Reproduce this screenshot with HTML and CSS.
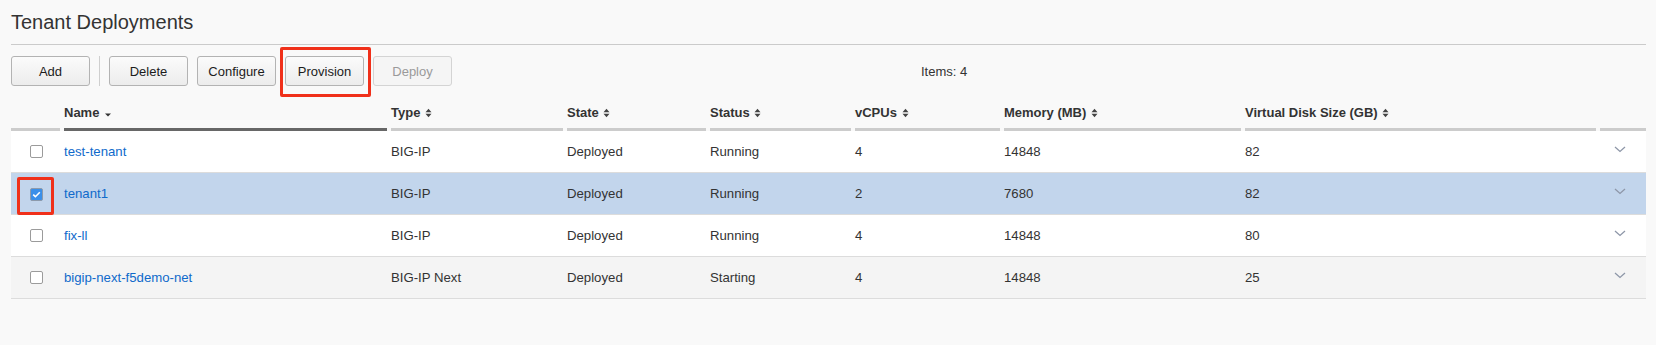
FILE: index.html
```html
<!DOCTYPE html>
<html lang="en">
<head>
    <meta charset="UTF-8">
    <title>Tenant Deployments</title>
    <link rel="stylesheet" href="styles.css">
</head>
<body>
    <div class="page">
        <h1 class="title">Tenant Deployments</h1>
        <div class="toolbar">
            <button class="btn">Add</button>
            <span class="sep"></span>
            <button class="btn">Delete</button>
            <button class="btn">Configure</button>
            <span class="mark mark-btn"><button class="btn">Provision</button></span>
            <button class="btn" disabled>Deploy</button>
            <span class="items">Items: 4</span>
        </div>
        <table class="grid">
            <colgroup>
                <col class="c-check">
                <col class="c-name">
                <col class="c-type">
                <col class="c-state">
                <col class="c-status">
                <col class="c-cpu">
                <col class="c-mem">
                <col class="c-disk">
                <col class="c-more">
            </colgroup>
            <thead>
                <tr>
                    <th><div class="th-in"></div></th>
                    <th><div class="th-in active">Name <svg class="caret" width="6" height="4" viewBox="0 0 6 4"><path d="M0 0.5h6L3 3.5z" fill="#333"/></svg></div></th>
                    <th><div class="th-in">Type <svg class="sort" width="7" height="10" viewBox="0 0 7 10"><path d="M0.5 4.2L3.5 0.8L6.5 4.2z M0.5 5.8L3.5 9.2L6.5 5.8z" fill="#444"/></svg></div></th>
                    <th><div class="th-in">State <svg class="sort" width="7" height="10" viewBox="0 0 7 10"><path d="M0.5 4.2L3.5 0.8L6.5 4.2z M0.5 5.8L3.5 9.2L6.5 5.8z" fill="#444"/></svg></div></th>
                    <th><div class="th-in">Status <svg class="sort" width="7" height="10" viewBox="0 0 7 10"><path d="M0.5 4.2L3.5 0.8L6.5 4.2z M0.5 5.8L3.5 9.2L6.5 5.8z" fill="#444"/></svg></div></th>
                    <th><div class="th-in">vCPUs <svg class="sort" width="7" height="10" viewBox="0 0 7 10"><path d="M0.5 4.2L3.5 0.8L6.5 4.2z M0.5 5.8L3.5 9.2L6.5 5.8z" fill="#444"/></svg></div></th>
                    <th><div class="th-in">Memory (MB) <svg class="sort" width="7" height="10" viewBox="0 0 7 10"><path d="M0.5 4.2L3.5 0.8L6.5 4.2z M0.5 5.8L3.5 9.2L6.5 5.8z" fill="#444"/></svg></div></th>
                    <th><div class="th-in">Virtual Disk Size (GB) <svg class="sort" width="7" height="10" viewBox="0 0 7 10"><path d="M0.5 4.2L3.5 0.8L6.5 4.2z M0.5 5.8L3.5 9.2L6.5 5.8z" fill="#444"/></svg></div></th>
                    <th><div class="th-in"></div></th>
                </tr>
            </thead>
            <tbody>
                <tr>
                    <td class="td-check"><span class="cb"></span></td>
                    <td><a href="#" class="link">test-tenant</a></td>
                    <td>BIG-IP</td>
                    <td>Deployed</td>
                    <td>Running</td>
                    <td>4</td>
                    <td>14848</td>
                    <td>82</td>
                    <td class="td-more"><svg class="chev" width="12" height="7" viewBox="0 0 12 7"><path d="M1 1l5 4.5L11 1" fill="none" stroke="#8e97a8" stroke-width="1.3"/></svg></td>
                </tr>
                <tr class="selected">
                    <td class="td-check"><span class="mark mark-cb"><span class="cb on"><svg width="9" height="7" viewBox="0 0 9 7"><path d="M1.2 3.6l2.2 2.1L7.8 1.3" fill="none" stroke="#fff" stroke-width="1.6"/></svg></span></span></td>
                    <td><a href="#" class="link">tenant1</a></td>
                    <td>BIG-IP</td>
                    <td>Deployed</td>
                    <td>Running</td>
                    <td>2</td>
                    <td>7680</td>
                    <td>82</td>
                    <td class="td-more"><svg class="chev" width="12" height="7" viewBox="0 0 12 7"><path d="M1 1l5 4.5L11 1" fill="none" stroke="#8e97a8" stroke-width="1.3"/></svg></td>
                </tr>
                <tr>
                    <td class="td-check"><span class="cb"></span></td>
                    <td><a href="#" class="link">fix-ll</a></td>
                    <td>BIG-IP</td>
                    <td>Deployed</td>
                    <td>Running</td>
                    <td>4</td>
                    <td>14848</td>
                    <td>80</td>
                    <td class="td-more"><svg class="chev" width="12" height="7" viewBox="0 0 12 7"><path d="M1 1l5 4.5L11 1" fill="none" stroke="#8e97a8" stroke-width="1.3"/></svg></td>
                </tr>
                <tr class="stripe">
                    <td class="td-check"><span class="cb"></span></td>
                    <td><a href="#" class="link">bigip-next-f5demo-net</a></td>
                    <td>BIG-IP Next</td>
                    <td>Deployed</td>
                    <td>Starting</td>
                    <td>4</td>
                    <td>14848</td>
                    <td>25</td>
                    <td class="td-more"><svg class="chev" width="12" height="7" viewBox="0 0 12 7"><path d="M1 1l5 4.5L11 1" fill="none" stroke="#8e97a8" stroke-width="1.3"/></svg></td>
                </tr>
            </tbody>
        </table>
    </div>
</body>
</html>
```

FILE: styles.css
```css
* {
    box-sizing: border-box;
}
body {
    margin: 0;
    background-color: #f9f9f9;
    color: #333;
    font-family: "Liberation Sans", Arial, sans-serif;
    font-size: 13px;
}
.page {
    padding: 0 10px 0 11px;
}
.title {
    margin: 0;
    padding: 11px 0;
    line-height: 22px;
    font-size: 20px;
    font-weight: normal;
    color: #333;
    border-bottom: 1px solid #cbcbcb;
}
.toolbar {
    display: flex;
    align-items: center;
    gap: 9px;
    margin: 11px 0 12px;
    height: 30px;
}
.btn {
    width: 79px;
    height: 30px;
    padding: 0;
    font-family: "Liberation Sans", Arial, sans-serif;
    font-size: 13px;
    color: #1c1c1c;
    background: linear-gradient(#fbfbfb, #ececec);
    border: 1px solid #b3b3b3;
    border-radius: 3px;
}
.btn:disabled {
    color: #9a9a9a;
    background: #f5f5f5;
    border-color: #d4d4d4;
}
.sep {
    width: 1px;
    height: 30px;
    background-color: #cfcfcf;
}
.items {
    margin-left: 460px;
    color: #333;
}
.mark {
    position: relative;
    display: inline-block;
}
.mark::after {
    content: "";
    position: absolute;
    border: 3px solid #f0301a;
    border-radius: 2px;
}
.mark-btn {
    height: 30px;
}
.mark-btn::after {
    top: -9px;
    bottom: -11px;
    left: -5px;
    right: -7px;
}
.mark-cb {
    vertical-align: middle;
}
.mark-cb::after {
    top: -11px;
    bottom: -14px;
    left: -13px;
    right: -11px;
}
.grid {
    width: 1635px;
    table-layout: fixed;
    border-collapse: separate;
    border-spacing: 0;
}
.c-check { width: 51px; }
.c-name { width: 327px; }
.c-type { width: 176px; }
.c-state { width: 143px; }
.c-status { width: 145px; }
.c-cpu { width: 149px; }
.c-mem { width: 241px; }
.c-disk { width: 355px; }
.c-more { width: 48px; }
.grid th {
    padding: 0 2px;
    text-align: left;
    font-weight: bold;
    color: #333;
}
.grid th:first-child {
    padding-left: 0;
}
.grid th:last-child {
    padding-right: 0;
}
.th-in {
    height: 33px;
    line-height: 30px;
    border-bottom: 3px solid #cccccc;
    white-space: nowrap;
}
.th-in.active {
    border-bottom-color: #676767;
}
.sort {
    vertical-align: -1px;
    margin-left: 1px;
}
.caret {
    vertical-align: 0;
    margin-left: 2px;
}
.grid td {
    height: 42px;
    padding: 0 2px;
    font-size: 13.2px;
    background-color: #fff;
    border-bottom: 1px solid #dcdcdc;
    color: #333;
    white-space: nowrap;
}
.grid tr.stripe td {
    background-color: #f4f4f4;
}
.grid tr.selected td {
    background-color: #c2d5ec;
}
.grid td.td-check {
    padding: 0;
    text-align: center;
}
.grid td.td-more {
    padding: 0 4px 0 0;
    text-align: center;
}
.chev {
    display: block;
    margin: 0 auto 5px;
}
.link {
    color: #0f6acb;
    text-decoration: none;
}
.cb {
    display: inline-block;
    width: 13px;
    height: 13px;
    vertical-align: middle;
    margin-top: -3px;
    background-color: #fff;
    border: 1px solid #9b9b9b;
    border-radius: 2px;
}
.cb.on {
    display: flex;
    justify-content: center;
    align-items: center;
    margin-top: 0;
    background-color: #3a8fe9;
    border-color: #8d9aab;
}
```
